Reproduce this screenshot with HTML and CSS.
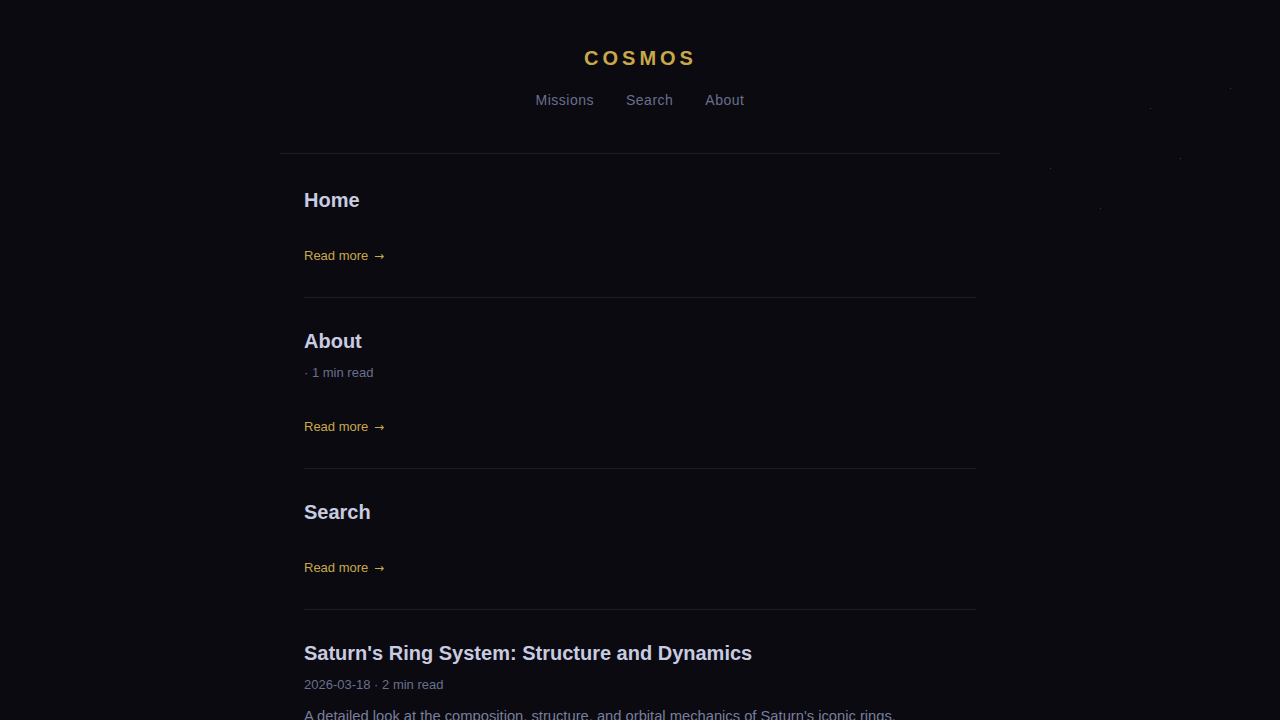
FILE: index.html
```html
<!DOCTYPE html>
<html lang="en">
<head>
<meta charset="utf-8">
<title>Cosmos</title>
<link rel="stylesheet" href="styles.css">
</head>
<body>
<div class="stars" aria-hidden="true"></div>
<header class="site-header">
  <a class="logo" href="#">COSMOS</a>
  <nav class="nav">
    <a href="#">Missions</a>
    <a href="#">Search</a>
    <a href="#">About</a>
  </nav>
</header>
<main class="posts">
  <article class="post">
    <h2 class="post-title">Home</h2>
    <p class="excerpt"></p>
    <a class="read-more" href="#">Read more <span class="arrow">→</span></a>
  </article>
  <article class="post">
    <h2 class="post-title">About</h2>
    <div class="meta"> · 1 min read</div>
    <p class="excerpt"></p>
    <a class="read-more" href="#">Read more <span class="arrow">→</span></a>
  </article>
  <article class="post">
    <h2 class="post-title">Search</h2>
    <p class="excerpt"></p>
    <a class="read-more" href="#">Read more <span class="arrow">→</span></a>
  </article>
  <article class="post">
    <h2 class="post-title">Saturn's Ring System: Structure and Dynamics</h2>
    <div class="meta">2026-03-18 · 2 min read</div>
    <p class="excerpt">A detailed look at the composition, structure, and orbital mechanics of Saturn's iconic rings.</p>
    <a class="read-more" href="#">Read more <span class="arrow">→</span></a>
  </article>
</main>
</body>
</html>
```
FILE: styles.css
```css
html, body {
  margin: 0;
  padding: 0;
}
body {
  background: #0a0a10;
  color: #c9cbe0;
  font-family: "Liberation Sans", Arial, sans-serif;
  min-height: 100vh;
}
a { text-decoration: none; }

.stars {
  position: absolute;
  left: 0;
  top: 0;
  width: 1px;
  height: 1px;
  background: transparent;
  box-shadow:
    1050px 168px 0 0 #3a3a47,
    1150px 108px 0 0 #3a3a47,
    1230px 88px 0 0 #3a3a47,
    1180px 158px 0 0 #3a3a47,
    1100px 208px 0 0 #3a3a47;
  pointer-events: none;
}

.site-header {
  max-width: 720px;
  margin: 0 auto;
  padding: 46px 0 43px;
  border-bottom: 1px solid #1c1c27;
  display: flex;
  flex-direction: column;
  align-items: center;
}
.logo {
  color: #c9a84c;
  font-size: 20px;
  font-weight: 700;
  line-height: 24px;
  letter-spacing: 4px;
  margin-right: -1px;
}
.nav {
  margin-top: 20px;
  display: flex;
  gap: 32px;
}
.nav a {
  color: #6b6f8e;
  font-size: 14px;
  line-height: 20px;
  letter-spacing: 0.5px;
}

.posts {
  max-width: 672px;
  margin: 0 auto;
  padding: 3px 24px 0;
}
.post {
  display: flex;
  flex-direction: column;
  align-items: flex-start;
  padding: 30px 0 32px;
  border-bottom: 1px solid #1c1c27;
}
.post-title {
  margin: 0 0 8px;
  font-size: 20px;
  line-height: 26px;
  font-weight: 700;
  color: #c9cbe0;
}
.meta {
  font-size: 13px;
  line-height: 21px;
  color: #6b6f8e;
  margin-bottom: 9px;
}
.excerpt {
  margin: 0 0 25px;
  font-size: 14.72px;
  line-height: 24px;
  color: #7a7e9c;
}
.read-more {
  color: #c9a84c;
  font-size: 13px;
  line-height: 18px;
  margin-top: 1px;
}
.arrow {
  display: inline-block;
  margin-left: 2px;
  font-family: "DejaVu Sans", sans-serif;
  font-size: 12px;
}
```
